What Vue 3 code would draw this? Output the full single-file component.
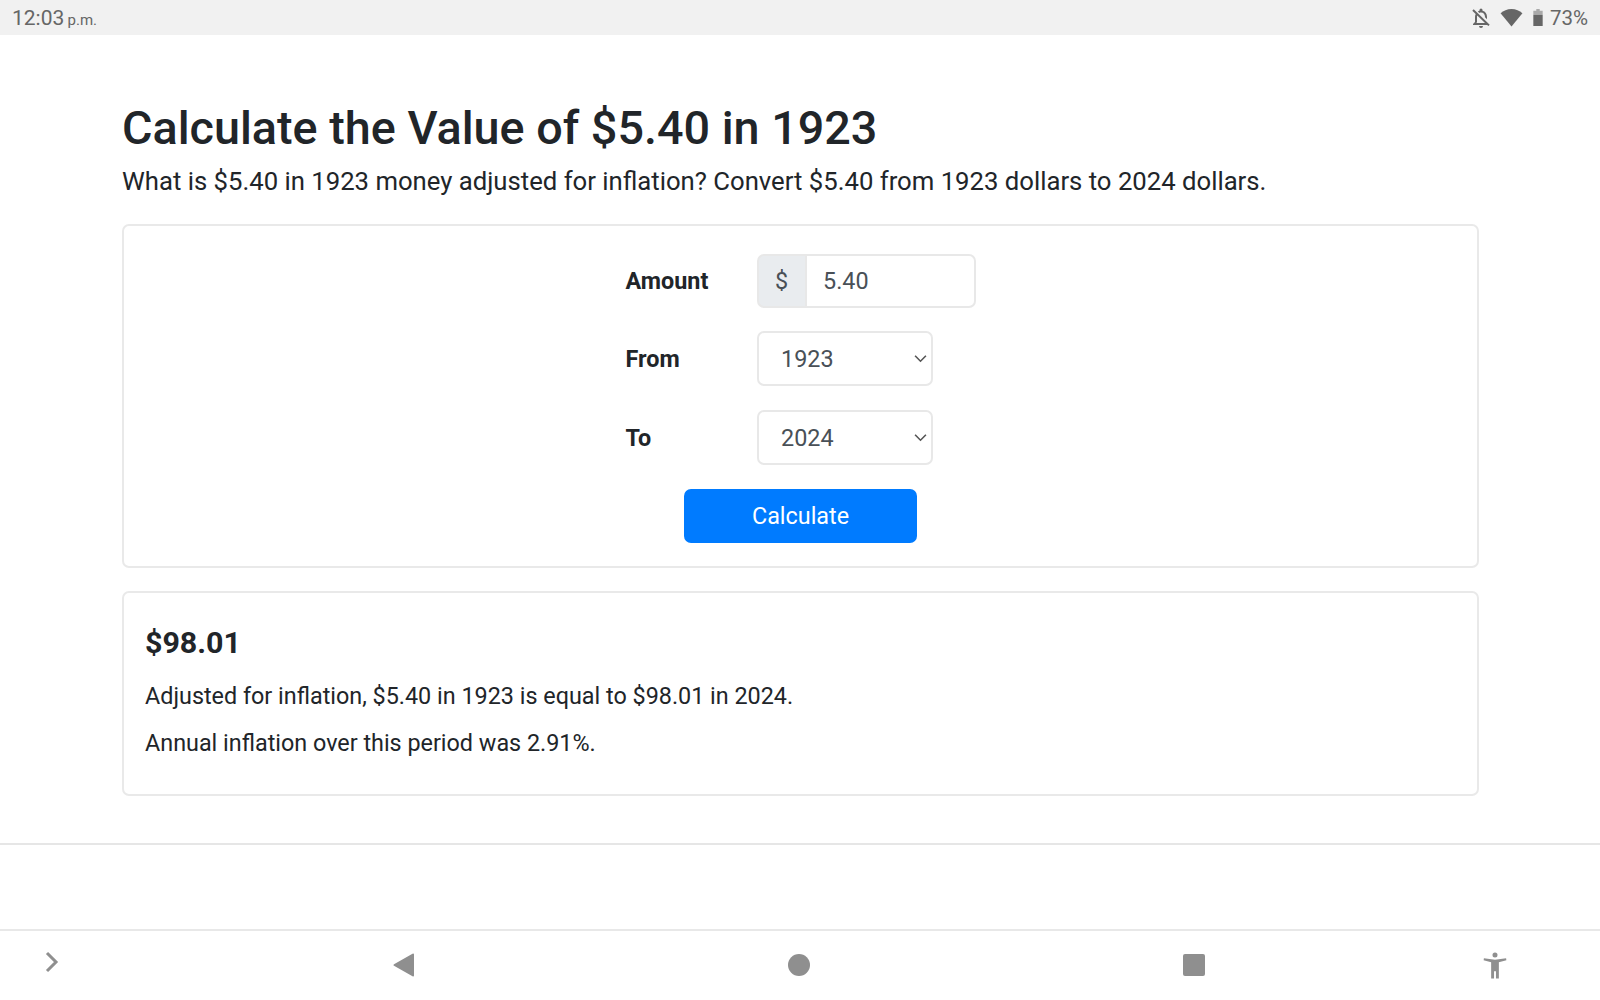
<script setup>
const selects = [
  { label: 'From', value: '1923' },
  { label: 'To', value: '2024' },
]
</script>

<template>
  <div class="screen">
    <header class="status">
      <div class="clock">12:03 <small>p.m.</small></div>
      <div class="status-right">
        <svg class="ic-bell" viewBox="0 0 24 24"><path d="M12 22a2 2 0 0 0 2-2h-4a2 2 0 0 0 2 2zM18 11c0-3.100-1.600-5.600-4.500-6.300V4a1.500 1.500 0 0 0-3 0v.7c-.6.1-1.100.4-1.600.7l1.500 1.500c.5-.2 1-.4 1.600-.4 2.500 0 4 1.900 4 4.500v.3l2 2V11zM4.700 3.300 3.300 4.700l3.400 3.400C6.200 9 6 10 6 11v5l-2 2v1h14.200l1.100 1.100 1.400-1.400L4.700 3.300zM16 17H7.200L8 16.200V11c0-.5.1-1 .3-1.400L16 17z"/></svg>
        <svg class="ic-wifi" viewBox="0 0 24 20"><path d="M12 19.500.5 5.500C3.500 2.800 7.500 1 12 1s8.500 1.800 11.500 4.500L12 19.500z"/></svg>
        <svg class="ic-batt" viewBox="0 0 12 20"><path class="batt-top" d="M4 0h4v2h3.500v5H.5V2H4z"/><path d="M.5 7h11v13H.5z"/></svg>
        <span class="pct">73%</span>
      </div>
    </header>

    <main class="page">
      <h1>Calculate the Value of $5.40 in 1923</h1>
      <p class="lead">What is $5.40 in 1923 money adjusted for inflation? Convert $5.40 from 1923 dollars to 2024 dollars.</p>

      <section class="card form-card">
        <form class="form" @submit.prevent>
          <div class="row">
            <label class="lbl">Amount</label>
            <div class="group">
              <span class="prefix">$</span>
              <input class="amount" value="5.40" />
            </div>
          </div>
          <div v-for="s in selects" :key="s.label" class="row">
            <label class="lbl">{{ s.label }}</label>
            <div class="select-wrap">
              <select class="sel"><option>{{ s.value }}</option></select>
              <svg class="chev" viewBox="0 0 12 8"><path d="M1 1.500 6 6.500l5-5"/></svg>
            </div>
          </div>
          <button class="btn" type="button">Calculate</button>
        </form>
      </section>

      <section class="card result">
        <h2>$98.01</h2>
        <p>Adjusted for inflation, $5.40 in 1923 is equal to $98.01 in 2024.</p>
        <p>Annual inflation over this period was 2.91%.</p>
      </section>
    </main>

    <hr class="rule" />

    <nav class="nav">
      <svg class="n-chev" viewBox="0 0 14 22"><path d="M2 2l9 9-9 9"/></svg>
      <svg class="n-back" viewBox="0 0 22 24"><path d="M21 1.500v21a1 1 0 0 1-1.500.8L1 12.800a1 1 0 0 1 0-1.600L19.500.7A1 1 0 0 1 21 1.500z"/></svg>
      <span class="n-home"></span>
      <span class="n-recent"></span>
      <svg class="n-a11y" viewBox="0 0 24 28"><circle cx="12" cy="3" r="2.600"/><path d="M.5 6.500 12 8l11.500-1.500.3 2L16 10.500V27.500h-3V20h-2v7.500H8V10.500L.2 8.500z"/></svg>
    </nav>
  </div>
</template>

<style scoped>
.screen {
  width: 1600px;
  height: 1000px;
  background: #fff;
  font-family: Roboto, "Liberation Sans", sans-serif;
  color: #212529;
  display: flex;
  flex-direction: column;
  overflow: hidden;
}
.status {
  height: 35px;
  flex: none;
  background: #f1f1f1;
  display: flex;
  align-items: center;
  justify-content: space-between;
  padding: 0 12px;
  color: #666;
}
.clock { font-size: 21px; }
.clock small { font-size: 15px; margin-left: -2px; }
.status-right { display: flex; align-items: center; }
.ic-bell { width: 24px; height: 24px; fill: #666; margin-right: 7px; margin-top: 1px; }
.ic-wifi { width: 23px; height: 19px; fill: #666; margin-right: 9px; }
.ic-batt { width: 12px; height: 17px; fill: #666; margin-right: 6px; }
.batt-top { fill: #aaa; }
.pct { font-size: 20.500px; }

.page { padding: 65px 121px 0 122px; flex: none; }
h1 {
  margin: 0;
  font-size: 46.720px;
  line-height: 56px;
  font-weight: 500;
}
.lead {
  margin: 6px 0 24px;
  font-size: 25.690px;
  line-height: 38px;
}
.card {
  border: 2px solid #e9e9e9;
  border-radius: 7px;
  box-sizing: border-box;
}
.form-card { height: 344px; display: flex; justify-content: center; padding-top: 27.500px; }
.form { width: 350px; display: flex; flex-direction: column; gap: 23.830px; }
.row { display: flex; align-items: center; }
.lbl { width: 131px; font-size: 23.360px; font-weight: 700; }
.group { display: flex; width: 219px; height: 54px; }
.prefix {
  width: 48px;
  background: #e9ecef;
  border: 2px solid #e8e8e8;
  border-right: 0;
  border-radius: 7px 0 0 7px;
  box-sizing: border-box;
  display: flex;
  align-items: center;
  justify-content: center;
  font-size: 23.360px;
  color: #495057;
}
.amount {
  flex: 1;
  min-width: 0;
  box-sizing: border-box;
  border: 2px solid #e8e8e8;
  border-radius: 0 7px 7px 0;
  padding: 0 16.500px;
  font: 23.360px Roboto, sans-serif;
  color: #495057;
  outline: none;
}
.select-wrap { position: relative; width: 176px; height: 55px; }
.sel {
  appearance: none;
  width: 100%;
  height: 100%;
  box-sizing: border-box;
  border: 2px solid #e8e8e8;
  border-radius: 7px;
  background: #fff;
  padding: 0 22.500px;
  font: 23.360px Roboto, sans-serif;
  color: #495057;
  outline: none;
}
.chev {
  position: absolute;
  right: 6px;
  top: 23px;
  width: 13px;
  height: 9px;
  fill: none;
  stroke: #555;
  stroke-width: 1.500;
}
.btn {
  align-self: center;
  width: 233px;
  height: 54px;
  background: #007bff;
  color: #fff;
  border: 0;
  border-radius: 7px;
  font: 23.360px Roboto, sans-serif;
}
.result {
  margin-top: 23px;
  height: 205px;
  padding: 23px 21px;
}
h2 {
  margin: 1px 0 12px;
  font-size: 30.400px;
  line-height: 52px;
  font-weight: 700;
}
.result p {
  margin: 0 0 15.500px;
  font-size: 23.360px;
  line-height: 31px;
}
.rule {
  flex: none;
  width: 100%;
  margin: 46.500px 0 0;
  border: 0;
  border-top: 2px solid #e6e6e6;
}
.nav {
  margin-top: 84px;
  flex: 1;
  border-top: 2px solid #e8e8e8;
  display: flex;
  align-items: center;
  padding-left: 45px;
}
.n-chev { flex: none; width: 14px; height: 22px; margin-top: -6px; fill: none; stroke: #8f8f8f; stroke-width: 3; }
.n-back { flex: none; width: 22px; height: 24px; margin-left: 334px; fill: #8f8f8f; }
.n-home { flex: none; width: 22px; height: 22px; margin-left: 373px; border-radius: 50%; background: #8f8f8f; }
.n-recent { flex: none; width: 22px; height: 22px; margin-left: 373px; border-radius: 2px; background: #8f8f8f; }
.n-a11y { flex: none; width: 24px; height: 27px; margin-left: 278px; fill: #8f8f8f; }
</style>
